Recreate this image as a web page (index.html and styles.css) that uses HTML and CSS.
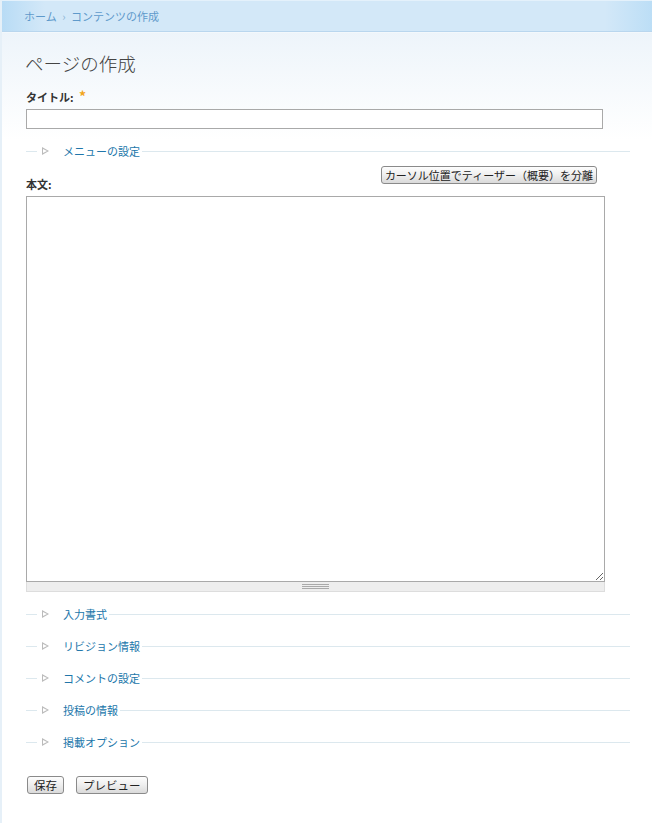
FILE: index.html
```html
<!DOCTYPE html>
<html lang="ja">
<head>
<meta charset="UTF-8">
<title>ページの作成</title>
<link rel="stylesheet" href="styles.css">
</head>
<body>
  <div class="header">
    <div class="crumbs"><a href="#">ホーム</a> <span class="sep">›</span> <a href="#">コンテンツの作成</a></div>
  </div>
  <div class="page">
    <h1>ページの作成</h1>
    <form>
      <label class="label" for="title">タイトル: <span class="req">*</span></label>
      <input id="title" class="text" type="text">

      <div class="collapsed first"><span class="arrow"></span><a href="#">メニューの設定</a></div>

      <div class="body-row">
        <label class="label" for="body">本文:</label>
        <button type="button" class="btn teaser">カーソル位置でティーザー（概要）を分離</button>
      </div>
      <textarea id="body" class="body"></textarea>
      <div class="grippie"><span></span></div>

      <div class="collapsed after-body"><span class="arrow"></span><a href="#">入力書式</a></div>
      <div class="collapsed"><span class="arrow"></span><a href="#">リビジョン情報</a></div>
      <div class="collapsed"><span class="arrow"></span><a href="#">コメントの設定</a></div>
      <div class="collapsed"><span class="arrow"></span><a href="#">投稿の情報</a></div>
      <div class="collapsed"><span class="arrow"></span><a href="#">掲載オプション</a></div>

      <div class="actions">
        <button type="button" class="btn">保存</button>
        <button type="button" class="btn">プレビュー</button>
      </div>
    </form>
  </div>
</body>
</html>
```

FILE: styles.css
```css
body{
  margin: 0;
  font-family: "Noto Sans CJK JP", "Liberation Sans", sans-serif;
  font-size: 11px;
  color: #333;
  background: linear-gradient(#e8f1f9, #ffffff 140px);
  border-left: 2px solid #e6f0f8;
  min-height: 823px;
  box-sizing: border-box;
}

a{
  color: #2176aa;
  text-decoration: none;
}

.header{
  height: 30px;
  border-top: 1px solid #e4f1fb;
  border-bottom: 1px solid #b9d6ee;
  background: linear-gradient(to right, #b7dbf5 0, #d3e8f8 45px, #d3e8f8 605px, #bcdef6 100%);
  display: flex;
  align-items: center;
  padding-left: 24px;
  margin-left: -2px;
}

.crumbs a{
  color: #5f9acb;
}

.crumbs .sep{
  color: #8ab3d3;
  margin: 0 3px;
}

.page{
  padding-left: 24px;
  padding-right: 20px;
  border-top: 1px solid #f3f8fc;
}

h1{
  margin: 0;
  padding-top: 18px;
  font-size: 18.5px;
  line-height: 24px;
  font-weight: 300;
  color: #444;
  margin-left: -1px;
}

.label{
  display: block;
  height: 16px;
  font-weight: bold;
  line-height: 16px;
  color: #333;
}

form > .label{
  margin-top: 14px;
}

.req{
  color: #f2a51a;
  font-size: 14px;
  line-height: 10px;
  margin-left: 3px;
}

.text{
  display: block;
  box-sizing: border-box;
  width: 577px;
  height: 20px;
  margin: 4px 0 0 0;
  border: 1px solid #a9a9a9;
  background: #fff;
}

.collapsed{
  display: flex;
  align-items: center;
  width: 604px;
  height: 16px;
  margin-top: 16px;
  font-size: 11px;
}

.collapsed::before{
  content: "";
  width: 11px;
  border-top: 1px solid #dce8ee;
}

.collapsed::after{
  content: "";
  flex: 1;
  margin-left: 2px;
  border-top: 1px solid #dce8ee;
}

.collapsed.first{
  margin-top: 14px;
}

.collapsed.after-body{
  margin-top: 14px;
}

.arrow{
  width: 0;
  height: 0;
  margin: 0 14px 0 5px;
  border-top: 4px solid transparent;
  border-bottom: 4px solid transparent;
  border-left: 7px solid #bbb;
  position: relative;
}

.arrow::after{
  content: "";
  position: absolute;
  left: -6px;
  top: -2px;
  border-top: 2px solid transparent;
  border-bottom: 2px solid transparent;
  border-left: 4px solid #fff;
}

.body-row{
  display: flex;
  justify-content: space-between;
  width: 571px;
  height: 26px;
  margin-top: 7px;
}

.body-row .label{
  align-self: flex-end;
}

.btn{
  font-family: "Noto Sans CJK JP", sans-serif;
  font-size: 11.5px;
  line-height: 14px;
  height: 18px;
  padding: 0 6px;
  color: #222;
  border: 1px solid #8a8a8a;
  border-radius: 3px;
  background: linear-gradient(#fdfdfd, #f0f0f0 45%, #dadada);
}

.teaser{
  align-self: flex-start;
  font-size: 11px;
  padding: 0 3px;
}

.body{
  display: block;
  box-sizing: border-box;
  width: 579px;
  height: 386px;
  margin: 4px 0 0 0;
  border: 1px solid #a9a9a9;
  resize: vertical;
  background: #fff;
}

.grippie{
  box-sizing: border-box;
  width: 579px;
  height: 10px;
  background: #eeeeee;
  border: 1px solid #dddddd;
  border-top: none;
  display: flex;
  justify-content: center;
  align-items: center;
}

.grippie span{
  width: 27px;
  height: 5px;
  border-top: 1px solid #aaa;
  border-bottom: 1px solid #aaa;
  position: relative;
  box-sizing: border-box;
}

.grippie span::after{
  content: "";
  position: absolute;
  left: 0;
  right: 0;
  top: 1px;
  border-top: 1px solid #aaa;
}

.actions{
  display: flex;
  gap: 12px;
  margin-top: 26px;
  padding-left: 1px;
}
```
